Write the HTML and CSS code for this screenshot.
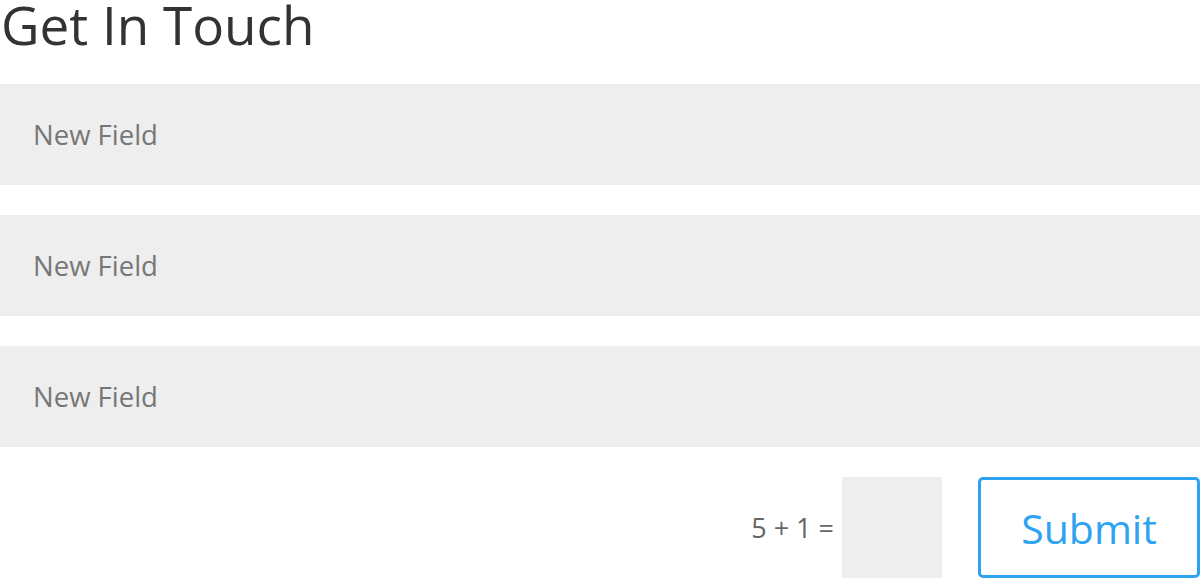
FILE: index.html
```html
<!DOCTYPE html>
<html>
<head>
<meta charset="utf-8">
<link rel="stylesheet" href="styles.css">
</head>
<body>
<div class="form-wrap">
  <h1 class="title">Get In Touch</h1>
  <form class="form">
    <div class="field"><input class="input" type="text" placeholder="New Field"></div>
    <div class="field"><input class="input" type="text" placeholder="New Field"></div>
    <div class="field"><input class="input" type="text" placeholder="New Field"></div>
    <div class="actions">
      <span class="captcha-q">5 + 1 =</span>
      <input class="captcha" type="text">
      <button class="submit" type="button">Submit</button>
    </div>
  </form>
</div>
</body>
</html>
```
FILE: styles.css
```css
* { box-sizing: border-box; }
html, body { margin: 0; padding: 0; background: #fff; }
body { font-family: "Open Sans", "Liberation Sans", sans-serif; width: 1200px; height: 580px; overflow: hidden; }
.form-wrap { padding: 0; }
.title {
  margin: 0;
  font-weight: 400;
  font-size: 53px;
  line-height: 50px;
  height: 50px;
  color: #333;
  padding-left: 1px;
}
.form { display: flex; flex-direction: column; gap: 30px; margin-top: 34px; }
.field { height: 101px; }
.input {
  width: 100%; height: 100%;
  border: none; outline: none;
  background: #eee;
  padding: 0 33px;
  font-family: inherit;
  font-size: 27.5px;
  color: #777;
}
.input::placeholder { color: #777; opacity: 1; }
.actions { display: flex; justify-content: flex-end; align-items: center; height: 101px; }
.captcha-q { font-size: 27px; color: #666; margin-right: 8px; }
.captcha { width: 100px; height: 101px; border: none; background: #eee; outline: none; margin-right: 36px; }
.submit {
  width: 222px; height: 101px;
  border: 3px solid #2ea3f2;
  border-radius: 5px;
  background: #fff;
  color: #2ea3f2;
  font-family: inherit;
  font-size: 41px;
  padding: 0;
}
```
